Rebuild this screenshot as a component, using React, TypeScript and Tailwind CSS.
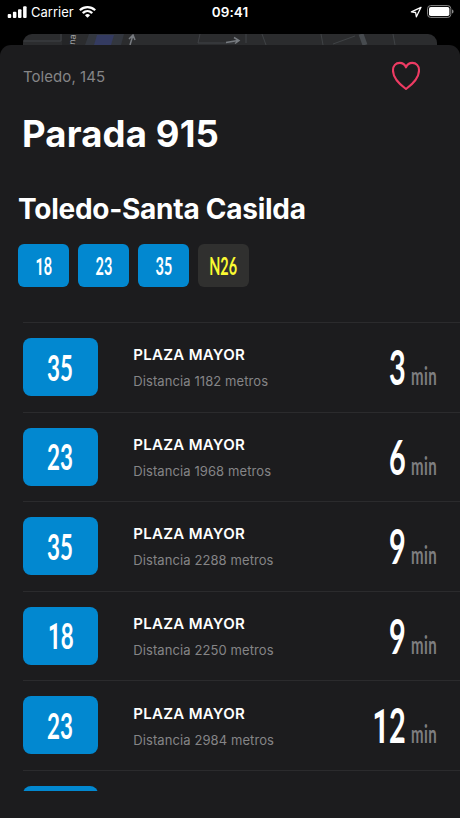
type Arrival = { line: string; stop: string; distance: number; minutes: number };

const lines = [
  { name: "18", night: false },
  { name: "23", night: false },
  { name: "35", night: false },
  { name: "N26", night: true },
];

const arrivals: Arrival[] = [
  { line: "35", stop: "PLAZA MAYOR", distance: 1182, minutes: 3 },
  { line: "23", stop: "PLAZA MAYOR", distance: 1968, minutes: 6 },
  { line: "35", stop: "PLAZA MAYOR", distance: 2288, minutes: 9 },
  { line: "18", stop: "PLAZA MAYOR", distance: 2250, minutes: 9 },
  { line: "23", stop: "PLAZA MAYOR", distance: 2984, minutes: 12 },
];

// Condensed figures; the "1" is taken from Roboto, whose figure has no foot.
function Figures({ text }: { text: string }) {
  return (
    <>
      {text.split("").map((c, i) =>
        c === "1" ? (
          <span key={i} className="font-['Roboto',sans-serif] leading-[0]">1</span>
        ) : (
          c
        ),
      )}
    </>
  );
}

function StatusBar() {
  return (
    <header className="grid h-[34px] grid-cols-3 items-start px-[7px] pt-[4px] text-[13px] leading-4 text-white">
      <div className="flex items-center">
        <svg className="h-[12px] w-[20px]" viewBox="0 0 20 12" fill="currentColor">
          <rect x="0.7" y="8" width="3.5" height="4" rx="1" />
          <rect x="5.9" y="5.7" width="3.5" height="6.3" rx="1" />
          <rect x="11" y="3.2" width="3.5" height="8.8" rx="1" />
          <rect x="16.1" y="0.3" width="3.5" height="11.7" rx="1" />
        </svg>
        <span className="ml-[4px] w-[48px] text-[13px]">Carrier</span>
        <svg className="h-[12px] w-[17px]" viewBox="0 0 17 12" fill="currentColor">
          <path d="M8.5 0C5.4 0 2.5 1.2.3 3.2a.4.4 0 0 0 0 .6l1 1c.2.2.4.2.6 0a9.7 9.7 0 0 1 13.200 0c.2.2.4.2.6 0l1-1a.4.4 0 0 0 0-.6A12 12 0 0 0 8.500 0Z" />
          <path d="M8.500 4.100c-2 0-3.800.75-5.200 2a.4.4 0 0 0 0 .6l1 1c.2.2.4.2.6 0a5.400 5.400 0 0 1 7.200 0c.2.2.4.2.6 0l1-1a.4.4 0 0 0 0-.6 7.700 7.700 0 0 0-5.200-2Z" />
          <path d="M8.500 8.100c-.9 0-1.700.3-2.300.8a.4.4 0 0 0 0 .6l2 2c.2.2.4.2.6 0l2-2a.4.4 0 0 0 0-.6c-.6-.5-1.400-.8-2.300-.8Z" />
        </svg>
      </div>
      <span className="text-center text-[13.5px] font-semibold tracking-[0.100px]">09:41</span>
      <div className="flex items-center justify-end gap-[5px] pt-[1px]">
        <svg className="h-[12px] w-[12px]" viewBox="0 0 12 12" fill="none" stroke="currentColor" strokeWidth="1.300" strokeLinejoin="round">
          <path d="M11 1.300 1.400 5.900l4.200.6.8 4.300Z" />
        </svg>
        <svg className="-mr-[1px] h-[13px] w-[27px]" viewBox="0 0 27 13">
          <rect x="0.600" y="0.600" width="23.200" height="11.800" rx="3" fill="none" stroke="#8a8a8a" strokeWidth="1" />
          <rect x="2" y="2" width="20.400" height="9" rx="1.800" fill="#fff" />
          <path d="M25 4.500c1 .3 1.500 1 1.500 2s-.5 1.700-1.500 2Z" fill="#8a8a8a" />
        </svg>
      </div>
    </header>
  );
}

function MapStrip() {
  return (
    <div className="mx-[23px] h-[11px] overflow-hidden rounded-t-[9px] bg-[#2b2c2e]">
      <svg className="h-[11px] w-[414px]" viewBox="0 0 414 11">
        <rect x="39" width="14" height="11" fill="#242527" />
        <path d="M66 0h35l-3 11H62Z" fill="#33373f" />
        <path d="M74 1h17l-3 10H71Z" fill="#343b61" />
        <path d="M0 7h38V0M177 0l-2 9h37M223 0v9M239 0l4 11M298 0l2 11M310 10l22-8M370 0l2 11" fill="none" stroke="#404246" />
        <path d="m338 0 4 11" stroke="#474b4f" strokeWidth="5" />
        <path d="m107 11 3-10m-4 4 4-4 2 5M203 8.500l12-2m-4-3 5 3-4 3" fill="none" stroke="#777b80" strokeWidth="1.500" />
        <text transform="translate(52 11) rotate(-84)" fontSize="9" fill="#a4a6a8" fontFamily="Inter, sans-serif">na</text>
      </svg>
    </div>
  );
}

function LineBadge({ name, night }: { name: string; night: boolean }) {
  return (
    <div className={`flex h-[43px] w-[51px] items-center justify-center rounded-[6px] ${night ? "bg-[#30302f] text-[#fafa32]" : "bg-[#0288d0] text-white"}`}>
      <span className="scale-x-[0.600] font-['Lato',sans-serif] text-[24px] leading-none font-bold">
        <Figures text={name} />
      </span>
    </div>
  );
}

function ArrivalRow({ line, stop, distance, minutes }: Arrival) {
  return (
    <li className="ml-[23px] flex h-[89.6px] shrink-0 items-start border-t border-[#2b2b2d] pt-[15px] pr-[23px]">
      <div className="-ml-[0.400px] flex h-[58px] w-[75.400px] shrink-0 items-center justify-center rounded-[8px] bg-[#0288d0] pb-[1px] text-white">
        <span className="scale-x-[0.620] font-['Lato',sans-serif] text-[36px] leading-none font-bold">
          <Figures text={line} />
        </span>
      </div>
      <div className="ml-[35.300px] flex-1 pt-[7.200px] whitespace-nowrap">
        <p className="text-[15px] leading-5 font-semibold tracking-[0.300px] text-white">{stop}</p>
        <p className="mt-[7px] text-[13px] leading-[18px] tracking-[0.090px] text-[#858587]">Distancia {distance} metros</p>
      </div>
      <div className="flex w-[70px] origin-right scale-x-[0.600] items-baseline justify-end gap-[9px] pt-[5px] font-['Lato',sans-serif] leading-none">
        <span className="text-[48px] font-bold text-white">
          <Figures text={String(minutes)} />
        </span>
        <span className="text-[25px] font-bold tracking-[0.600px] text-[#7e7e80]">min</span>
      </div>
    </li>
  );
}

export default function App() {
  return (
    <div className="flex h-[818px] w-[460px] flex-col overflow-hidden bg-black font-['Inter',sans-serif]">
      <StatusBar />
      <MapStrip />
      <main className="flex min-h-0 flex-1 flex-col rounded-t-[11px] bg-[#1c1c1e]">
        <div className="flex h-[62px] items-start justify-between pr-[40px] pl-[23px]">
          <p className="pt-[21.500px] text-[15px] leading-5 tracking-[0.060px] text-[#858587]">Toledo, 145</p>
          <svg className="mt-[16px] h-[30px] w-[28px]" viewBox="0 0 28 30" fill="none" stroke="#ee3b63" strokeWidth="2.100" strokeLinejoin="round">
            <path d="M14 28C10 25 1 18.500 1 9.500 1 5 3.800 1.900 7.700 1.900c2.700 0 5 1.400 6.300 4.400 1.300-3 3.600-4.400 6.300-4.400C24.200 1.900 27 5 27 9.500 27 18.500 18 25 14 28Z" />
          </svg>
        </div>
        <h1 className="pl-[22px] text-[36.500px] leading-[54px] font-bold tracking-[0.150px] text-white">Parada 915</h1>
        <h2 className="mt-[29px] pl-[18px] text-[28px] leading-[38px] font-bold tracking-[-0.260px] whitespace-nowrap text-white">Toledo-Santa Casilda</h2>
        <div className="mt-[16px] flex gap-[9px] pl-[18px]">
          {lines.map((l) => (
            <LineBadge key={l.name} {...l} />
          ))}
        </div>
        <ul className="mt-[35px] flex h-[469px] shrink-0 flex-col overflow-hidden">
          {arrivals.map((a, i) => (
            <ArrivalRow key={i} {...a} />
          ))}
          {/* Top edge of the next row, cut off by the list */}
          <li className="ml-[23px] shrink-0 border-t border-[#2b2b2d] pt-[15px]">
            <div className="-ml-[0.400px] h-[58px] w-[75.400px] rounded-[8px] bg-[#0288d0]" />
          </li>
        </ul>
      </main>
    </div>
  );
}
